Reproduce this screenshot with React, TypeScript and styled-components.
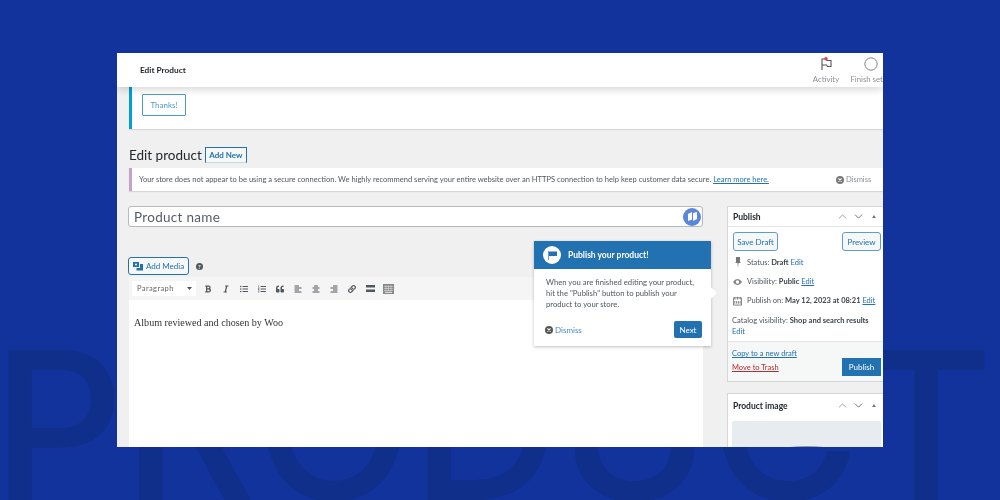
import styled, { createGlobalStyle } from 'styled-components'
import {
  FaBold, FaItalic, FaListUl, FaListOl, FaQuoteLeft, FaAlignLeft, FaAlignCenter, FaAlignRight, FaLink,
} from 'react-icons/fa'
import { ChevronUp, ChevronDown } from 'lucide-react'

const GlobalStyle = createGlobalStyle`
  html, body { margin: 0; padding: 0; background: #12339b; }
  body { font-family: Lato, "Liberation Sans", sans-serif; }
  button { font-family: Lato, "Liberation Sans", sans-serif; }
`

const Page = styled.div`
  position: relative;
  width: 1000px;
  height: 500px;
  overflow: hidden;
  box-sizing: border-box;
  padding: 53px 0 0 117px;
  background: #12339b;
`

const Watermark = styled.div`
  position: absolute;
  left: -8px;
  top: 322px;
  font-family: Inter, sans-serif;
  font-weight: 500;
  font-size: 206px;
  line-height: 1;
  letter-spacing: -1.5px;
  white-space: nowrap;
  color: #0f2f8a;
`

const Frame = styled.div`
  position: relative;
  width: 766px;
  height: 394px;
  overflow: hidden;
  background: #f0f0f1;
  color: #3c434a;
  font-size: 8px;
  filter: blur(0.25px);
`

const TopBar = styled.header`
  position: relative;
  z-index: 2;
  height: 34px;
  display: flex;
  align-items: center;
  gap: 8px;
  padding-left: 23px;
  background: #fff;
  box-shadow: 0 2px 8px rgba(0, 0, 0, 0.18);
`

const PageTitle = styled.div`
  flex: 1;
  font-size: 8.3px;
  font-weight: 700;
  color: #23282d;
`

const TopAction = styled.div<{ width: number; bleed?: number }>`
  width: ${({ width }) => width}px;
  margin-right: ${({ bleed }) => -(bleed ?? 0)}px;
  flex: none;
  display: flex;
  flex-direction: column;
  align-items: center;
  gap: 3px;
  font-size: 7.8px;
  color: #8a8f94;
  white-space: nowrap;
`

const Content = styled.div`
  padding-left: 12px;
`

const ThanksNotice = styled.div`
  height: 42px;
  box-sizing: border-box;
  padding: 7px 0 0 10px;
  background: #fff;
  border-left: 3px solid #00a0d2;
  box-shadow: 0 1px 1px rgba(0, 0, 0, 0.1);
`

const ThanksButton = styled.button`
  width: 44px;
  height: 22px;
  padding: 0;
  background: #fff;
  border: 1px solid #4a9cc7;
  border-radius: 1px;
  font-size: 8px;
  color: #4a9cc7;
`

const HeadingRow = styled.div`
  display: flex;
  align-items: center;
  gap: 3px;
  height: 16px;
  margin-top: 18px;
`

const Heading = styled.h1`
  margin: 0;
  font-size: 13.5px;
  font-weight: 400;
  color: #23282d;
`

const AddNew = styled.button`
  width: 42px;
  height: 16px;
  padding: 0;
  background: #f6f7f7;
  border: 1px solid #2271b1;
  border-bottom-color: #c3d6e6;
  font-size: 8px;
  font-weight: 700;
  color: #2271b1;
`

const SecureNotice = styled.div`
  display: flex;
  align-items: center;
  height: 23px;
  margin-top: 5px;
  box-sizing: border-box;
  padding-left: 7px;
  background: #fff;
  border-left: 3px solid #c9a0cc;
  box-shadow: 0 1px 1px rgba(0, 0, 0, 0.1);
  font-size: 7.55px;
  color: #50575e;
  white-space: nowrap;
`

const DismissLink = styled.span`
  display: inline-flex;
  align-items: center;
  gap: 2px;
  margin-left: 67px;
  color: #8a8f94;
`

const TextLink = styled.a<{ danger?: boolean }>`
  color: ${({ danger }) => (danger ? '#b32d2e' : '#2271b1')};
  text-decoration: underline;
`

const PlainLink = styled.span`
  color: #2271b1;
`

const Columns = styled.div`
  display: grid;
  grid-template-columns: 574px 156px;
  column-gap: 24px;
  margin-top: 15px;
`

const MainColumn = styled.main`
  position: relative;
`

const TitleBox = styled.div`
  display: flex;
  align-items: center;
  justify-content: space-between;
  height: 21px;
  margin-left: -1px;
  box-sizing: border-box;
  padding: 0 1px 0 5px;
  background: #fff;
  border: 1px solid #b4b9be;
  border-radius: 3px;
  font-size: 13.5px;
  letter-spacing: 0.3px;
  color: #555d66;
`

const MapBadge = styled.span`
  display: flex;
  align-items: center;
  justify-content: center;
  width: 18px;
  height: 18px;
  border-radius: 50%;
  background: #5b86d9;
`

const MediaRow = styled.div`
  display: flex;
  align-items: center;
  gap: 7px;
  height: 18px;
  margin: 30px 0 2px -1px;
`

const MediaButton = styled.button`
  display: flex;
  align-items: center;
  justify-content: center;
  gap: 3px;
  width: 61px;
  height: 18px;
  padding: 0;
  background: #f6f7f7;
  border: 1px solid #2271b1;
  border-radius: 3px;
  font-size: 8px;
  color: #2271b1;
`

const HelpDot = styled.span`
  display: flex;
  align-items: center;
  justify-content: center;
  width: 7px;
  height: 7px;
  border-radius: 50%;
  background: #50575e;
  font-size: 6px;
  font-weight: 700;
  color: #fff;
`

const Toolbar = styled.div`
  display: flex;
  align-items: center;
  height: 23px;
  box-sizing: border-box;
  padding-left: 3px;
  background: #f5f5f5;
`

const FormatSelect = styled.div`
  display: flex;
  align-items: center;
  justify-content: space-between;
  width: 64px;
  height: 15px;
  margin-right: 3px;
  box-sizing: border-box;
  padding: 0 4px 0 5px;
  background: #fff;
  font-size: 7.5px;
  letter-spacing: 0.4px;
  color: #666;
`

const ToolIcon = styled.span`
  display: flex;
  align-items: center;
  justify-content: center;
  width: 18px;
  color: #50575e;
  font-size: 8px;
`

const Editor = styled.div`
  height: 147px;
  box-sizing: border-box;
  padding: 17px 5px;
  background: #fff;
  font-family: "Liberation Serif", serif;
  font-size: 10.1px;
  color: #333;
`

const Tour = styled.aside`
  position: absolute;
  left: 405px;
  top: 35px;
  width: 177px;
  height: 105px;
  background: #fff;
  box-shadow: 0 1px 3px rgba(0, 0, 0, 0.25);
  &::after {
    content: '';
    position: absolute;
    right: -4px;
    top: 48px;
    width: 8px;
    height: 8px;
    background: #fff;
    transform: rotate(45deg);
  }
`

const TourHead = styled.div`
  display: flex;
  align-items: center;
  gap: 7px;
  height: 28px;
  box-sizing: border-box;
  padding-left: 9px;
  background: #2271b1;
  font-size: 8.5px;
  font-weight: 700;
  color: #fff;
`

const TourFlag = styled.span`
  display: flex;
  align-items: center;
  justify-content: center;
  width: 18px;
  height: 18px;
  border-radius: 50%;
  background: #fff;
`

const TourText = styled.p`
  margin: 8px 0 0;
  padding: 0 14px 0 12px;
  font-size: 7.7px;
  line-height: 11px;
  color: #50575e;
`

const TourFoot = styled.div`
  display: flex;
  align-items: center;
  justify-content: space-between;
  margin-top: 11px;
  padding: 0 9px 0 11px;
`

const TourDismiss = styled.span`
  display: flex;
  align-items: center;
  gap: 2px;
  color: #4a8dc0;
  font-size: 8px;
`

const NextButton = styled.button`
  width: 28px;
  height: 17px;
  padding: 0;
  background: #2271b1;
  border: 0;
  border-radius: 2px;
  font-size: 8px;
  color: #fff;
`

const SideColumn = styled.div`
  display: flex;
  flex-direction: column;
  gap: 11px;
`

const MetaBox = styled.section`
  background: #fff;
  border: 1px solid #d5d7d9;
  border-right: 0;
`

const BoxHead = styled.div<{ tall?: boolean }>`
  display: flex;
  align-items: center;
  height: ${({ tall }) => (tall ? 23 : 19)}px;
  padding: 0 0 ${({ tall }) => (tall ? 4 : 0)}px 5px;
  border-bottom: ${({ tall }) => (tall ? 0 : '1px solid #e4e5e6')};
  font-size: 8.5px;
  font-weight: 700;
  color: #23282d;
`

const BoxTitle = styled.span`
  flex: 1;
`

const BoxControls = styled.span`
  display: flex;
  align-items: center;
  gap: 3px;
  width: 47px;
  color: #8a8f94;
`

const SmallCaret = styled.span`
  width: 0;
  height: 0;
  margin-left: 4px;
  border: 2.5px solid transparent;
  border-top: 0;
  border-bottom: 3px solid #777;
`

const DraftActions = styled.div`
  display: flex;
  justify-content: space-between;
  padding: 5px 2px 2px 5px;
`

const GhostButton = styled.button<{ width: number }>`
  width: ${({ width }) => width}px;
  height: 19px;
  padding: 0;
  background: #f6f7f7;
  border: 1px solid #5c9ec9;
  border-radius: 3px;
  font-size: 8px;
  color: #2271b1;
`

const MetaRow = styled.div`
  display: flex;
  align-items: center;
  gap: 5px;
  height: 19px;
  padding-left: 5px;
  font-size: 7.5px;
  color: #50575e;
  white-space: nowrap;
  b { font-weight: 700; color: #3c434a; }
`

const MetaIcon = styled.span`
  display: flex;
  justify-content: center;
  width: 9px;
  color: #777;
`

const CatalogRow = styled.div`
  padding: 5px 0 4px 4px;
  font-size: 7.55px;
  line-height: 11px;
  color: #50575e;
  b { font-weight: 700; color: #3c434a; }
`

const BoxFoot = styled.div`
  display: flex;
  justify-content: space-between;
  height: 40px;
  box-sizing: border-box;
  padding: 6px 2px 0 4px;
  background: #f6f7f7;
  border-top: 1px solid #e4e5e6;
  font-size: 7.5px;
`

const FootLinks = styled.div`
  display: flex;
  flex-direction: column;
  gap: 3px;
  line-height: 11px;
`

const PublishButton = styled.button`
  width: 39px;
  height: 18px;
  margin-top: 10px;
  padding: 0;
  background: #2271b1;
  border: 0;
  font-size: 8px;
  color: #fff;
`

const ImageArea = styled.div`
  display: flex;
  justify-content: center;
  height: 40px;
  box-sizing: border-box;
  padding-top: 24px;
  margin: 0 2px 0 4px;
  background: #e6ecef;
  border-radius: 2px;
`

const DismissIcon = ({ color }: { color: string }) => (
  <svg width="8" height="8" viewBox="0 0 10 10">
    <circle cx="5" cy="5" r="5" fill={color} />
    <path d="M3 3l4 4M7 3l-4 4" stroke="#fff" strokeWidth="1.3" />
  </svg>
)

const BoxButtons = () => (
  <BoxControls>
    <ChevronUp size={13} strokeWidth={1.5} />
    <ChevronDown size={13} strokeWidth={1.5} color="#555" />
    <SmallCaret />
  </BoxControls>
)

const tools = [FaBold, FaItalic, FaListUl, FaListOl, FaQuoteLeft, FaAlignLeft, FaAlignCenter, FaAlignRight, FaLink]

export default function App() {
  return (
    <Page>
      <GlobalStyle />
      <Watermark>PRODUCT</Watermark>
      <Frame>
        <TopBar>
          <PageTitle>Edit Product</PageTitle>
          <TopAction width={38}>
            <svg width="13" height="14" viewBox="0 0 13 14" fill="none">
              <path d="M2 13V2h4l1 1.5h4v6H7.5L6.5 8H2" stroke="#555" strokeWidth="1.1" />
              <circle cx="6" cy="1.8" r="1.7" fill="#e04048" />
            </svg>
            Activity
          </TopAction>
          <TopAction width={36} bleed={6}>
            <svg width="14" height="14" viewBox="0 0 14 14" fill="none">
              <circle cx="7" cy="7" r="6.2" stroke="#777" strokeWidth="0.9" />
            </svg>
            Finish setup
          </TopAction>
        </TopBar>
        <Content>
          <ThanksNotice>
            <ThanksButton>Thanks!</ThanksButton>
          </ThanksNotice>
          <HeadingRow>
            <Heading>Edit product</Heading>
            <AddNew>Add New</AddNew>
          </HeadingRow>
          <SecureNotice>
            <span>
              Your store does not appear to be using a secure connection. We highly recommend serving your entire
              website over an HTTPS connection to help keep customer data secure.{' '}
              <TextLink>Learn more here.</TextLink>
            </span>
            <DismissLink>
              <DismissIcon color="#777" />
              Dismiss
            </DismissLink>
          </SecureNotice>
          <Columns>
            <MainColumn>
              <TitleBox>
                Product name
                <MapBadge>
                  <svg width="11" height="11" viewBox="0 0 11 11">
                    <path d="M1 3l4-2v7.5L1 10zM6 2l4-1v7l-4 2z" fill="#fff" />
                  </svg>
                </MapBadge>
              </TitleBox>
              <MediaRow>
                <MediaButton>
                  <svg width="10" height="10" viewBox="0 0 10 10">
                    <path d="M0 1h6v5H0z" fill="#2271b1" />
                    <path d="M7 3h3v6.5H3.5V7H7z" fill="#2271b1" />
                    <circle cx="3" cy="3.5" r="1" fill="#fff" />
                  </svg>
                  Add Media
                </MediaButton>
                <HelpDot>?</HelpDot>
              </MediaRow>
              <Toolbar>
                <FormatSelect>
                  Paragraph
                  <svg width="5" height="3" viewBox="0 0 5 3">
                    <path d="M0 0h5L2.5 3z" fill="#555" />
                  </svg>
                </FormatSelect>
                {tools.map((Icon, i) => (
                  <ToolIcon key={i}>
                    <Icon />
                  </ToolIcon>
                ))}
                <ToolIcon>
                  <svg width="9" height="7" viewBox="0 0 9 7">
                    <path d="M0 0h9v2.5H0zM0 4.5h9V7H0z" fill="#50575e" />
                  </svg>
                </ToolIcon>
                <ToolIcon>
                  <svg width="11" height="10" viewBox="0 0 11 10">
                    <path d="M0 0h11v10H0z" fill="#888" />
                    <path d="M1 2.5h9M1 4.5h9M1 6.5h9M3 1v6M5.5 1v6M8 1v6" stroke="#ddd" strokeWidth="0.6" />
                    <path d="M2 8.3h7" stroke="#eee" />
                  </svg>
                </ToolIcon>
              </Toolbar>
              <Editor>Album reviewed and chosen by Woo</Editor>
              <Tour>
                <TourHead>
                  <TourFlag>
                    <svg width="11" height="11" viewBox="0 0 11 11">
                      <path d="M1 1h1v9H1z" fill="#6b9bd0" />
                      <path d="M2 1.5h8V6H2z" fill="#2271b1" />
                    </svg>
                  </TourFlag>
                  Publish your product!
                </TourHead>
                <TourText>
                  When you are finished editing your product, hit the "Publish" button to publish your product to your
                  store.
                </TourText>
                <TourFoot>
                  <TourDismiss>
                    <DismissIcon color="#555" />
                    Dismiss
                  </TourDismiss>
                  <NextButton>Next</NextButton>
                </TourFoot>
              </Tour>
            </MainColumn>
            <SideColumn>
              <MetaBox>
                <BoxHead>
                  <BoxTitle>Publish</BoxTitle>
                  <BoxButtons />
                </BoxHead>
                <DraftActions>
                  <GhostButton width={45}>Save Draft</GhostButton>
                  <GhostButton width={39}>Preview</GhostButton>
                </DraftActions>
                <MetaRow>
                  <MetaIcon>
                    <svg width="6" height="11" viewBox="0 0 6 11">
                      <path d="M1 0h4v5l1 1H3.5L3 11l-.5-5H0l1-1z" fill="#777" />
                    </svg>
                  </MetaIcon>
                  <span>
                    Status: <b>Draft</b> <PlainLink>Edit</PlainLink>
                  </span>
                </MetaRow>
                <MetaRow>
                  <MetaIcon>
                    <svg width="11" height="8" viewBox="0 0 11 8">
                      <path d="M0 4c3-5 8-5 11 0-3 5-8 5-11 0z" fill="#888" />
                      <circle cx="5.5" cy="4" r="2" fill="#fff" />
                    </svg>
                  </MetaIcon>
                  <span>
                    Visibility: <b>Public</b> <TextLink>Edit</TextLink>
                  </span>
                </MetaRow>
                <MetaRow>
                  <MetaIcon>
                    <svg width="10" height="10" viewBox="0 0 10 10" fill="none">
                      <path d="M.5 1.5h9v8h-9z" stroke="#777" />
                      <path d="M2 .5v3M5 .5v3M8 .5v3M2 5v3M4 5v3M6 5v3M8 5v3" stroke="#777" />
                    </svg>
                  </MetaIcon>
                  <span>
                    Publish on: <b>May 12, 2023 at 08:21</b> <TextLink>Edit</TextLink>
                  </span>
                </MetaRow>
                <CatalogRow>
                  Catalog visibility: <b>Shop and search results</b>
                  <br />
                  <PlainLink>Edit</PlainLink>
                </CatalogRow>
                <BoxFoot>
                  <FootLinks>
                    <TextLink>Copy to a new draft</TextLink>
                    <TextLink danger>Move to Trash</TextLink>
                  </FootLinks>
                  <PublishButton>Publish</PublishButton>
                </BoxFoot>
              </MetaBox>
              <MetaBox>
                <BoxHead tall>
                  <BoxTitle>Product image</BoxTitle>
                  <BoxButtons />
                </BoxHead>
                <ImageArea>
                  <svg width="54" height="6" viewBox="0 0 54 6" fill="none">
                    <path d="M1 5C14 1 40 1 53 5" stroke="#8d9499" strokeWidth="2" />
                  </svg>
                </ImageArea>
              </MetaBox>
            </SideColumn>
          </Columns>
        </Content>
      </Frame>
    </Page>
  )
}
